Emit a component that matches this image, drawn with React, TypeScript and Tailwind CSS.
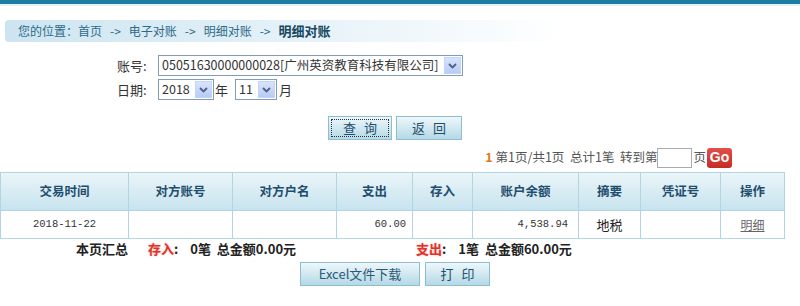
import React from "react";

const Chevron = () => (
  <svg width="9" height="6" viewBox="0 0 9 6">
    <path d="M1 1 L4.5 4.5 L8 1" fill="none" stroke="#4d6185" strokeWidth="1.8" />
  </svg>
);

const Select = ({ text, w }: { text: string; w: string }) => (
  <div className={`${w} h-[21px] border border-[#7f9db9] bg-white flex items-stretch`}>
    <div className="flex-1 flex items-center pl-[3px] text-[12.5px] text-[#333] whitespace-nowrap overflow-hidden">{text}</div>
    <div className="w-[17px] m-[1px] bg-gradient-to-b from-[#d8e4fb] to-[#b7cbf5] border border-[#c3d3fd] flex items-center justify-center">
      <Chevron />
    </div>
  </div>
);

const cols = [128, 104, 104, 76, 60, 106, 62, 80, 64];

export default function App() {
  const font = { fontFamily: '"Noto Sans CJK SC", "Liberation Sans", sans-serif' };
  const btn =
    "h-[24px] border border-[#8dbdd0] bg-gradient-to-b from-[#eef7fa] to-[#b4d9e6] text-[#1d4f6f] text-[13px] flex items-center justify-center";
  return (
    <div className="w-[800px] h-[306px] bg-white overflow-hidden text-[#333]" style={font}>
      <div className="h-[4px] bg-[#1b7ea6]" />
      <div className="h-[2px] bg-[#e4f3f8]" />
      <div className="mt-[14px] ml-[5px] h-[22px] w-[560px] rounded-l-[4px] bg-gradient-to-r from-[#cde5f1] via-[#e4f1f8] to-white flex items-center pl-[13px] text-[12px] text-[#2d6a88] whitespace-nowrap">
        <span>您的位置：首页</span>
        <span className="mx-[8px]">-&gt;</span>
        <span>电子对账</span>
        <span className="mx-[8px]">-&gt;</span>
        <span>明细对账</span>
        <span className="mx-[8px]">-&gt;</span>
        <span className="font-bold text-[13px] text-[#15485e]">明细对账</span>
      </div>

      <div className="mt-[13px] flex items-center pl-[117px]">
        <span className="w-[41px] text-[13px] text-[#333]">账号:</span>
        <Select w="w-[305px]" text="05051630000000028[广州英资教育科技有限公司]" />
      </div>
      <div className="mt-[3px] flex items-center pl-[117px]">
        <span className="w-[41px] text-[13px] text-[#333]">日期:</span>
        <Select w="w-[56px]" text="2018" />
        <span className="ml-[1px] w-[20px] text-[13px]">年</span>
        <Select w="w-[42px]" text="11" />
        <span className="ml-[2px] text-[13px]">月</span>
      </div>

      <div className="mt-[16px] flex pl-[328px] gap-[4px]">
        <div className={`${btn} w-[64px] h-[23px] border-[#2f4f5f] outline outline-1 outline-dotted outline-[#333] -outline-offset-[4px] tracking-[8px] pl-[8px]`}>查询</div>
        <div className={`${btn} w-[66px] h-[23px] tracking-[8px] pl-[8px]`}>返回</div>
      </div>

      <div className="mt-[7px] flex items-center justify-end pr-[68px] h-[21px] text-[12.5px] text-[#555] whitespace-nowrap">
        <span className="text-[#e07a16] font-bold mr-[3px]">1</span>
        <span>第1页/共1页&nbsp; 总计1笔&nbsp; 转到第</span>
        <div className="w-[35px] h-[20px] border border-[#a5acb5] bg-white" />
        <span className="ml-[1px]">页</span>
        <div className="ml-[1px] w-[25px] h-[20px] rounded-[3px] bg-gradient-to-b from-[#e2504a] to-[#c62a24] text-white font-bold text-[14px] flex items-center justify-center" style={{ fontFamily: '"Liberation Sans", sans-serif' }}>Go</div>
      </div>

      <table className="mt-[4px] border-collapse table-fixed w-[784px] text-[12px]">
        <colgroup>
          {cols.map((c, i) => (
            <col key={i} style={{ width: c }} />
          ))}
        </colgroup>
        <thead>
          <tr className="h-[38px] bg-gradient-to-b from-[#eaf5f9] to-[#c6e3ee]">
            {["交易时间", "对方账号", "对方户名", "支出", "存入", "账户余额", "摘要", "凭证号", "操作"].map((h) => (
              <th key={h} className="border border-[#b3d5e2] font-bold text-[#1e4d6e] text-[12.5px] text-center">
                {h}
              </th>
            ))}
          </tr>
        </thead>
        <tbody>
          <tr className="h-[28px]">
            <td className="border border-[#b3d5e2] text-center text-[10.5px]" style={{ fontFamily: '"Liberation Mono", monospace' }}>2018-11-22</td>
            <td className="border border-[#b3d5e2]" />
            <td className="border border-[#b3d5e2]" />
            <td className="border border-[#b3d5e2] text-right pr-[6px] text-[10.5px]" style={{ fontFamily: '"Liberation Mono", monospace' }}>60.00</td>
            <td className="border border-[#b3d5e2]" />
            <td className="border border-[#b3d5e2] text-right pr-[10px] text-[10.5px]" style={{ fontFamily: '"Liberation Mono", monospace' }}>4,538.94</td>
            <td className="border border-[#b3d5e2] text-center text-[13px] text-[#222]">地税</td>
            <td className="border border-[#b3d5e2]" />
            <td className="border border-[#b3d5e2] text-center text-[12px] text-[#666] underline">明细</td>
          </tr>
        </tbody>
      </table>

      <div className="h-[20px] flex items-center text-[13px] font-bold text-[#222] whitespace-nowrap">
        <span className="ml-[76px]">本页汇总</span>
        <span className="ml-[20px] text-[#e0322a]" style={{ textShadow: "0 0 2px #f7b0a8" }}>存入</span>
        <span>:</span>
        <span className="ml-[12px]">0笔&nbsp; 总金额0.00元</span>
        <span className="ml-[120px] text-[#e0322a]" style={{ textShadow: "0 0 2px #f7b0a8" }}>支出</span>
        <span>:</span>
        <span className="ml-[12px]">1笔&nbsp; 总金额60.00元</span>
      </div>

      <div className="mt-[3px] flex pl-[300px] gap-[5px]">
        <div className={`${btn} w-[120px] text-[#2b5a78]`}>Excel文件下载</div>
        <div className={`${btn} w-[65px] tracking-[8px] pl-[8px]`}>打印</div>
      </div>
    </div>
  );
}
